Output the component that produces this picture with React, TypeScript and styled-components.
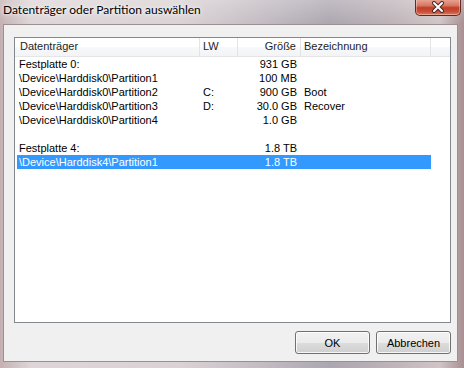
import React from "react";
import styled, { createGlobalStyle } from "styled-components";

const Global = createGlobalStyle`
  html, body { margin: 0; padding: 0; }
  body { width: 464px; height: 368px; overflow: hidden; background: #d9d0d2; }
  * { box-sizing: border-box; }
`;

const TITLE_FONT = `"Segoe UI", Lato, "Liberation Sans", sans-serif`;
const UI_FONT = `"Segoe UI", "Liberation Sans", Arial, sans-serif`;

const Window = styled.div`
  width: 464px;
  height: 368px;
  display: flex;
  flex-direction: column;
  background:
    linear-gradient(180deg, rgba(255,255,255,0.25) 0px, rgba(255,255,255,0) 24px),
    linear-gradient(90deg, #c4b0b2 0px, #ddd5d7 30px, #dad2d4 180px, #c3bcc3 260px, #aca6b0 330px, #bdb3b8 390px, #d0c4c6 440px, #a88f92 464px);
  font-family: ${UI_FONT};
  font-size: 11px;
  color: #000;
`;

const TitleBar = styled.div`
  height: 24px;
  flex: none;
  display: flex;
  align-items: flex-start;
  justify-content: space-between;
  padding: 0 3px 0 3px;
`;

const Title = styled.div`
  font-family: ${TITLE_FONT};
  font-size: 12px;
  line-height: 20px;
  color: #000;
  text-shadow: 0 0 6px rgba(255,255,255,0.9), 0 0 3px rgba(255,255,255,0.9);
`;

const CloseButton = styled.div`
  width: 46px;
  height: 17px;
  margin-top: -1px;
  display: flex;
  align-items: center;
  justify-content: center;
  border: 1px solid #5d2a26;
  border-top: none;
  border-radius: 0 0 5px 5px;
  background: linear-gradient(180deg, #eaa898 0%, #d77a66 40%, #c23e26 55%, #c9503a 80%, #de7c5e 100%);
  box-shadow: inset 0 0 0 1px rgba(255,255,255,0.35);
`;

const Client = styled.div`
  flex: 1;
  margin: 0 6px 6px 3px;
  background: #f0f0f0;
  border: 1px solid #9c8f92;
  display: flex;
  flex-direction: column;
  padding: 12px 6px 7px 10px;
`;

const ListView = styled.div`
  flex: 1;
  background: #fff;
  border: 1px solid #828790;
  display: flex;
  flex-direction: column;
  overflow: hidden;
`;

const HeaderRow = styled.div`
  display: grid;
  grid-template-columns: 185px 38px 63px 130px 1fr;
  height: 19px;
  background: linear-gradient(180deg, #ffffff 0%, #ffffff 50%, #f7f8fa 51%, #f3f4f6 100%);
  border-bottom: 1px solid #e5e5e5;
`;

const HeaderCell = styled.div<{ $align?: "left" | "right"; $pad: number }>`
  border-right: 1px solid #e3e4e6;
  line-height: 17px;
  padding-left: ${(p) => (p.$align === "right" ? 0 : p.$pad)}px;
  padding-right: ${(p) => (p.$align === "right" ? p.$pad : 0)}px;
  text-align: ${(p) => p.$align ?? "left"};
  white-space: nowrap;
  color: #1e1e1e;
`;

const HeaderFiller = styled.div``;

const Body = styled.div`
  display: flex;
  flex-direction: column;
  padding-left: 2px;
`;

const Row = styled.div<{ $selected?: boolean }>`
  display: grid;
  grid-template-columns: 183px 38px 63px 130px;
  width: 414px;
  height: 14px;
  line-height: 14px;
  background: ${(p) => (p.$selected ? "#3399ff" : "transparent")};
  color: ${(p) => (p.$selected ? "#fff" : "#000")};
`;

const Cell = styled.div<{ $align?: "left" | "right"; $pad: number }>`
  padding-left: ${(p) => (p.$align === "right" ? 0 : p.$pad)}px;
  padding-right: ${(p) => (p.$align === "right" ? p.$pad : 0)}px;
  text-align: ${(p) => p.$align ?? "left"};
  white-space: nowrap;
  overflow: hidden;
`;

const ButtonRow = styled.div`
  display: flex;
  justify-content: flex-end;
  gap: 6px;
  margin-top: 8px;
`;

const Button = styled.button`
  width: 75px;
  height: 23px;
  font-family: ${UI_FONT};
  font-size: 11px;
  color: #000;
  border: 1px solid #707070;
  border-radius: 3px;
  background: linear-gradient(180deg, #f2f2f2 0%, #ebebeb 50%, #dddddd 51%, #cfcfcf 100%);
  box-shadow: inset 0 0 0 1px rgba(255,255,255,0.8);
  padding: 0;
`;

type Item = { name: string; lw: string; size: string; label: string; selected?: boolean };

const items: Item[] = [
  { name: "Festplatte 0:", lw: "", size: "931 GB", label: "" },
  { name: "\\Device\\Harddisk0\\Partition1", lw: "", size: "100 MB", label: "" },
  { name: "\\Device\\Harddisk0\\Partition2", lw: "C:", size: "900 GB", label: "Boot" },
  { name: "\\Device\\Harddisk0\\Partition3", lw: "D:", size: "30.0 GB", label: "Recover" },
  { name: "\\Device\\Harddisk0\\Partition4", lw: "", size: "1.0 GB", label: "" },
  { name: "", lw: "", size: "", label: "" },
  { name: "Festplatte 4:", lw: "", size: "1.8 TB", label: "" },
  { name: "\\Device\\Harddisk4\\Partition1", lw: "", size: "1.8 TB", label: "", selected: true },
];

const CloseIcon = () => (
  <svg width="14" height="12" viewBox="0 0 14 12">
    <path d="M3 2 L11 10 M11 2 L3 10" stroke="#4a2a28" strokeWidth="4" strokeLinecap="round" />
    <path d="M3 2 L11 10 M11 2 L3 10" stroke="#ffffff" strokeWidth="2" strokeLinecap="round" />
  </svg>
);

export default function App() {
  return (
    <>
      <Global />
      <Window>
        <TitleBar>
          <Title>Datenträger oder Partition auswählen</Title>
          <CloseButton>
            <CloseIcon />
          </CloseButton>
        </TitleBar>
        <Client>
          <ListView>
            <HeaderRow>
              <HeaderCell $pad={5}>Datenträger</HeaderCell>
              <HeaderCell $pad={3}>LW</HeaderCell>
              <HeaderCell $align="right" $pad={4}>Größe</HeaderCell>
              <HeaderCell $pad={3}>Bezeichnung</HeaderCell>
              <HeaderFiller />
            </HeaderRow>
            <Body>
              {items.map((it, i) => (
                <Row key={i} $selected={it.selected}>
                  <Cell $pad={2}>{it.name}</Cell>
                  <Cell $pad={3}>{it.lw}</Cell>
                  <Cell $align="right" $pad={4}>{it.size}</Cell>
                  <Cell $pad={3}>{it.label}</Cell>
                </Row>
              ))}
            </Body>
          </ListView>
          <ButtonRow>
            <Button>OK</Button>
            <Button>Abbrechen</Button>
          </ButtonRow>
        </Client>
      </Window>
    </>
  );
}
